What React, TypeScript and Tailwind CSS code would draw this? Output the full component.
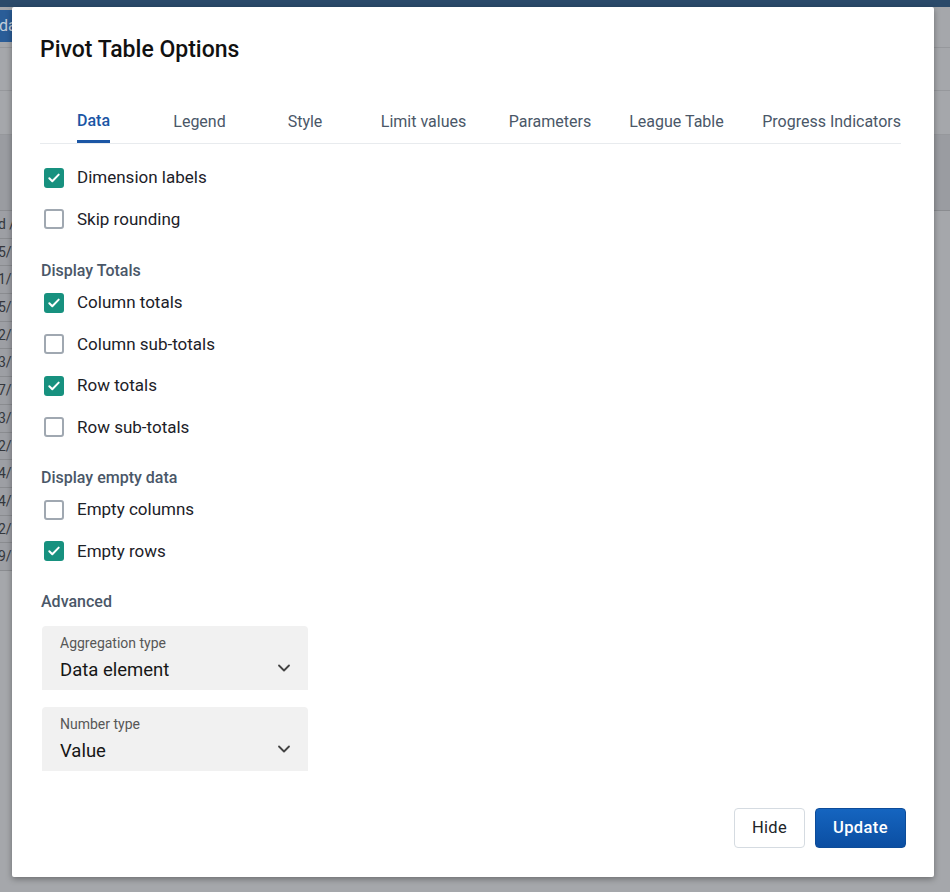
import { ChevronDown } from "lucide-react";

const TABS = [
  { label: "Data", width: "w-[107px]" },
  { label: "Legend", width: "w-[105px]" },
  { label: "Style", width: "w-[106px]" },
  { label: "Limit values", width: "w-[131px]" },
  { label: "Parameters", width: "w-[122px]" },
  { label: "League Table", width: "w-[131px]" },
  { label: "Progress Indicators", width: "w-[159px]" },
];

const DATES = ["d /", "5/1", "1/1", "5/1", "2/1", "3/1", "7/1", "3/2", "2/1", "4/1", "4/2", "2/1", "9/2"];

function Checkbox({ label, checked }: { label: string; checked?: boolean }) {
  return (
    <label className="flex items-center h-[41.5px] pl-[4px] gap-[13px] cursor-pointer">
      {checked ? (
        <span className="w-[20px] h-[20px] rounded-[3px] bg-[#17917f] flex items-center justify-center">
          <svg width="14" height="14" viewBox="0 0 14 14" fill="none">
            <path d="M2.3 7.2l3 3 6.4-6.6" stroke="white" strokeWidth="2" strokeLinecap="round" strokeLinejoin="round" />
          </svg>
        </span>
      ) : (
        <span className="w-[20px] h-[20px] rounded-[3px] border-2 border-[#a0a8b1] bg-white" />
      )}
      <span className="text-[17px] text-[#1c2128]">{label}</span>
    </label>
  );
}

function SectionTitle({ children }: { children: string }) {
  return <div className="h-[20px] leading-[20px] text-[16px] font-medium text-[#4a5768] pl-[1px]">{children}</div>;
}

function SelectField({ label, value }: { label: string; value: string }) {
  return (
    <div className="ml-[2px] w-[266px] h-[64px] bg-[#f1f1f1] rounded-t-[4px] pl-[18px] pr-[14px] pt-[9px] flex items-start justify-between">
      <div className="flex flex-col">
        <span className="text-[14px] leading-[16px] text-[#575757]">{label}</span>
        <span className="text-[18.5px] leading-[22px] mt-[8px] text-[#161616]">{value}</span>
      </div>
      <ChevronDown size={20} strokeWidth={2.2} className="text-[#444] mt-[23px]" />
    </div>
  );
}

export default function App() {
  return (
    <div className="relative w-[950px] h-[892px] overflow-hidden bg-[#a5a7ab] font-['Roboto',sans-serif]">
      {/* dimmed app behind the dialog */}
      <div className="h-[7px] bg-[#2b4a6a]" />
      <div className="flex flex-col">
        <div className="h-[41px] border-b border-[#96989c] pt-[3px]">
          <div className="w-[60px] h-[32px] bg-[#2a5d98] text-[#c3cedb] text-[16px] leading-[32px] overflow-hidden">
            <span className="ml-[-1px]">da</span>
          </div>
        </div>
        <div className="h-[43px] border-b border-[#96989c]" />
        <div className="h-[44px] border-b border-[#96989c]" />
        <div className="h-[76px] bg-[#9a9ca1] border-b border-[#8a8c90]" />
        <div className="flex flex-col bg-[#9d9fa4] w-[40px]">
          {DATES.map((d, i) => (
            <div key={i} className="h-[27.7px] border-b border-[#8a8c90] text-[14px] leading-[27px] text-[#34373c] overflow-hidden whitespace-nowrap">
              <span className="ml-[-2px]">{d}</span>
            </div>
          ))}
        </div>
      </div>

      {/* dialog */}
      <div className="absolute left-[12px] top-[7px] w-[922px] h-[870px] bg-white rounded-[2px] shadow-[0_2px_6px_rgba(0,0,0,0.35)] flex flex-col">
        <div className="pl-[28px] pr-[33px] pt-[30px] flex flex-col">
          <h1 className="text-[23px] leading-[26px] font-medium text-[#111]">Pivot Table Options</h1>
          <div className="mt-[32px] flex border-b border-[#e8ebee]">
            {TABS.map((t, i) => (
              <div key={t.label} className={`${t.width} h-[48px] flex ${i === TABS.length - 1 ? "justify-end" : "justify-center"}`}>
                <div
                  className={`h-full flex items-center text-[16px] pt-[6px] ${
                    i === 0 ? "text-[#1b56a5] font-medium border-b-[3px] border-[#1b56a5]" : "text-[#4a5768]"
                  }`}
                >
                  {t.label}
                </div>
              </div>
            ))}
          </div>

          <div className="mt-[13px] flex flex-col">
            <Checkbox label="Dimension labels" checked />
            <Checkbox label="Skip rounding" />
            <div className="mt-[21px] mb-[1px]">
              <SectionTitle>Display Totals</SectionTitle>
            </div>
            <Checkbox label="Column totals" checked />
            <Checkbox label="Column sub-totals" />
            <Checkbox label="Row totals" checked />
            <Checkbox label="Row sub-totals" />
            <div className="mt-[20px] mb-[1px]">
              <SectionTitle>Display empty data</SectionTitle>
            </div>
            <Checkbox label="Empty columns" />
            <Checkbox label="Empty rows" checked />
            <div className="mt-[20px]">
              <SectionTitle>Advanced</SectionTitle>
            </div>
            <div className="mt-[14px] flex flex-col gap-[17px]">
              <SelectField label="Aggregation type" value="Data element" />
              <SelectField label="Number type" value="Value" />
            </div>
          </div>
        </div>

        <div className="mt-auto pb-[29px] pr-[28px] flex justify-end gap-[10px]">
          <button className="w-[71px] h-[40px] rounded-[4px] border border-[#d5dbe1] bg-white text-[16.5px] text-[#212529] tracking-[0.3px]">
            Hide
          </button>
          <button className="w-[91px] h-[40px] rounded-[4px] border border-[#0d4c99] bg-gradient-to-b from-[#1565c0] to-[#0b4ea2] text-[16.5px] font-medium text-white tracking-[0.4px]">
            Update
          </button>
        </div>
      </div>
    </div>
  );
}
